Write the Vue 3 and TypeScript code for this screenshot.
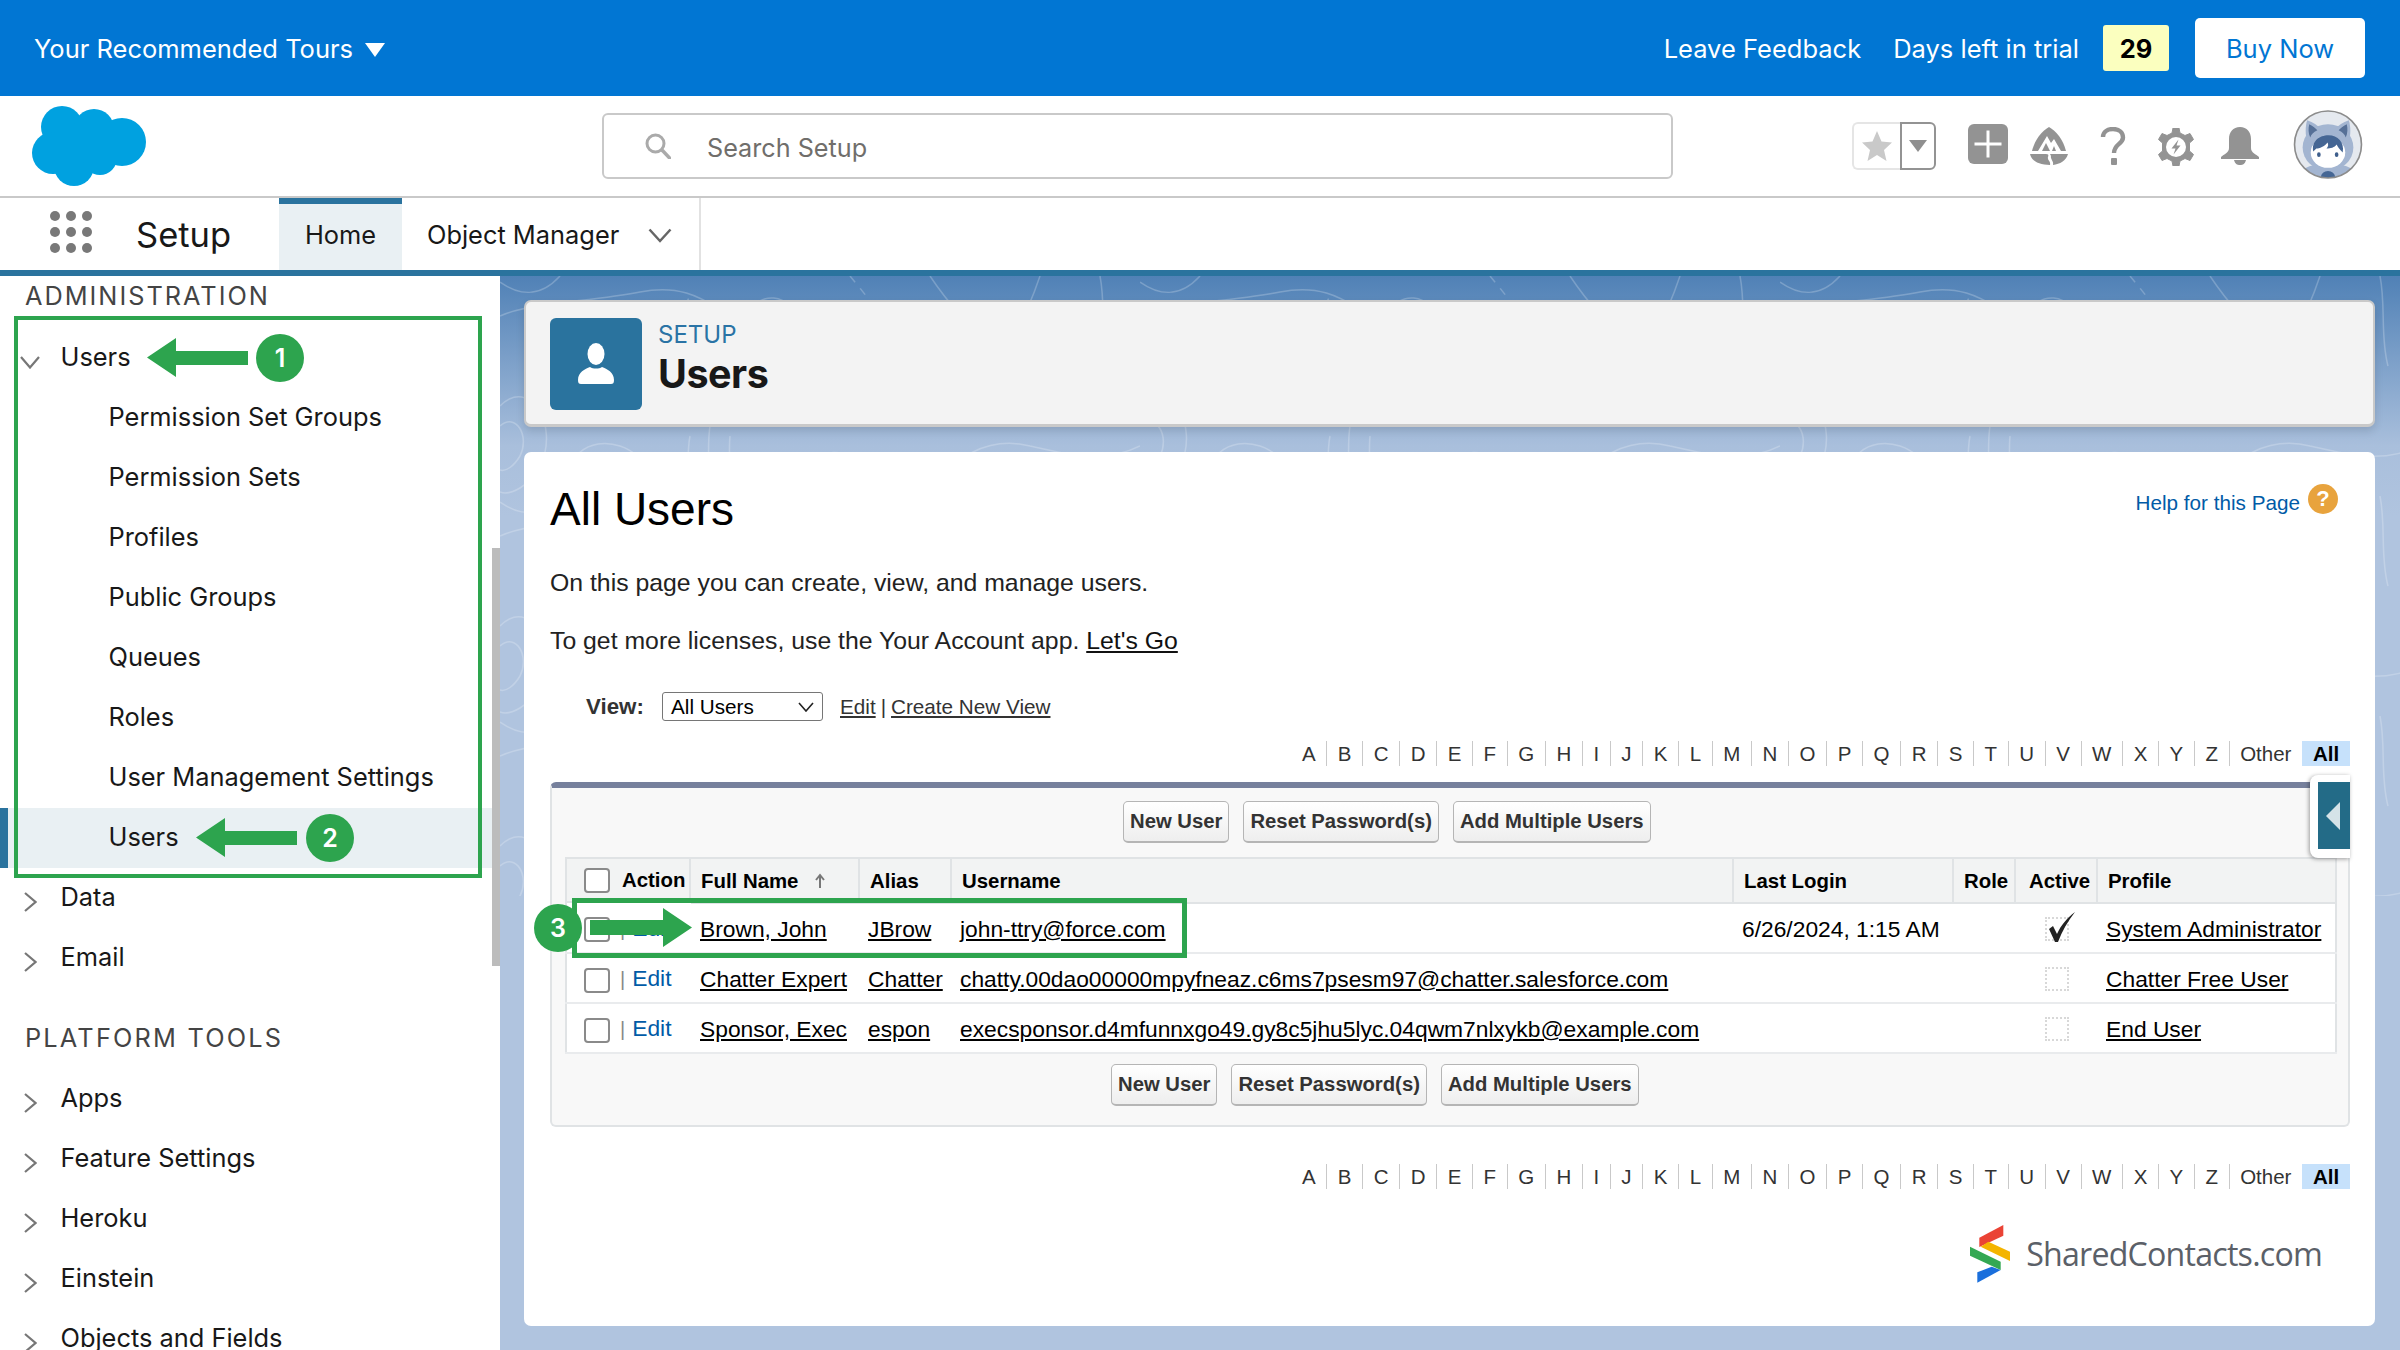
<script setup lang="ts">
interface UserRow {
  name: string
  alias: string
  username: string
  lastLogin: string
  active: boolean
  profile: string
}

const userSubItems: string[] = [
  'Permission Set Groups',
  'Permission Sets',
  'Profiles',
  'Public Groups',
  'Queues',
  'Roles',
  'User Management Settings'
]
const platformItems: string[] = ['Apps', 'Feature Settings', 'Heroku', 'Einstein', 'Objects and Fields']
const letters: string[] = 'ABCDEFGHIJKLMNOPQRSTUVWXYZ'.split('').concat('Other')
const buttons: string[] = ['New User', 'Reset Password(s)', 'Add Multiple Users']
const columns: string[] = ['Full Name', 'Alias', 'Username', 'Last Login', 'Role', 'Active', 'Profile']
const users: UserRow[] = [
  {
    name: 'Brown, John',
    alias: 'JBrow',
    username: 'john-ttry@force.com',
    lastLogin: '6/26/2024, 1:15 AM',
    active: true,
    profile: 'System Administrator'
  },
  {
    name: 'Chatter Expert',
    alias: 'Chatter',
    username: 'chatty.00dao00000mpyfneaz.c6ms7psesm97@chatter.salesforce.com',
    lastLogin: '',
    active: false,
    profile: 'Chatter Free User'
  },
  {
    name: 'Sponsor, Exec',
    alias: 'espon',
    username: 'execsponsor.d4mfunnxgo49.gy8c5jhu5lyc.04qwm7nlxykb@example.com',
    lastLogin: '',
    active: false,
    profile: 'End User'
  }
]
</script>

<template>
  <div class="page">
    <div class="trial-bar">
      <div class="tours">
        <span>Your Recommended Tours</span>
        <svg class="tours-caret" viewBox="0 0 20 14"><polygon points="0,0 20,0 10,14" fill="#fff" /></svg>
      </div>
      <div class="trial-right">
        <span class="feedback">Leave Feedback</span>
        <span class="days">Days left in trial</span>
        <span class="days-count">29</span>
        <button class="buy">Buy Now</button>
      </div>
    </div>

    <div class="global-header">
      <svg class="cloud" viewBox="0 0 114 80">
        <g fill="#00a1e0">
          <circle cx="30" cy="21" r="21" />
          <circle cx="62" cy="23" r="20" />
          <circle cx="90" cy="36" r="24" />
          <circle cx="21" cy="47" r="21" />
          <circle cx="42" cy="60" r="20" />
          <circle cx="68" cy="52" r="17" />
          <rect x="25" y="20" width="60" height="35" />
        </g>
      </svg>
      <div class="search">
        <svg class="search-icon" viewBox="0 0 26 26">
          <circle cx="10.5" cy="10.5" r="8.5" fill="none" stroke="#aaa" stroke-width="3" />
          <path d="M17 17 L24.5 25" stroke="#aaa" stroke-width="3.4" stroke-linecap="round" />
        </svg>
        <input class="search-input" placeholder="Search Setup" />
      </div>
      <div class="header-icons">
        <div class="fav">
          <div class="fav-star">
            <svg viewBox="0 0 32 32" width="32" height="32">
              <polygon points="16,1 20.5,11.5 31,12.5 23,20 25.5,31 16,25 6.5,31 9,20 1,12.5 11.5,11.5" fill="#c9c9c9" />
            </svg>
          </div>
          <div class="fav-drop">
            <svg viewBox="0 0 18 12" width="18" height="12"><polygon points="0,0 18,0 9,12" fill="#8f8f8f" /></svg>
          </div>
        </div>
        <svg class="hicon add" viewBox="0 0 40 40">
          <rect width="40" height="40" rx="6" fill="#939393" />
          <path d="M20 6.5 V33.5 M6.5 20 H33.5" stroke="#fff" stroke-width="3" />
        </svg>
        <svg class="hicon trail" viewBox="0 0 38 38">
          <path d="M19 0 C26 4 33 12 36 24 L2 24 C5 12 12 4 19 0 Z" fill="#939393" />
          <path d="M8 24 L17 9 L21 16 L24 12 L31 24 L26 24 L24 19 L22 24 L20 24 L16 16 L12 24 Z" fill="#fff" />
          <path d="M0 27 H14 C18 27 19 27 18 30 C17 33 21 34 20 38 C10 38 2 35 0 27 Z" fill="#939393" />
          <path d="M20 27 H38 C36 34 30 37 23 38 C24 34 20 32 21 29 Z" fill="#939393" />
        </svg>
        <svg class="hicon help" viewBox="0 0 26 38">
          <path d="M3 10 C3 4.500 8 2 13 2 C19 2 23 5.500 23 10.500 C23 17 14 17 14 26" fill="none" stroke="#939393" stroke-width="4.400" />
          <rect x="11" y="31" width="6" height="7" rx="1" fill="#939393" />
        </svg>
        <svg class="hicon gear" viewBox="0 0 36 38">
          <path d="M15 0 H21 L22 5 L27 7.500 L32 5.500 L35.500 11.500 L31.500 15 V23 L35.500 26.500 L32 32.500 L27 30.500 L22 33 L21 38 H15 L14 33 L9 30.500 L4 32.500 L0.500 26.500 L4.500 23 V15 L0.500 11.500 L4 5.500 L9 7.500 L14 5 Z" fill="#939393" stroke="#939393" stroke-width="1" stroke-linejoin="round" />
          <circle cx="18" cy="19" r="10" fill="#fff" />
          <path d="M20.500 11.500 L13.500 20.500 H17.500 L15.500 26.500 L22.500 17.500 H18.500 Z" fill="#939393" />
        </svg>
        <svg class="hicon bell" viewBox="0 0 38 38">
          <path d="M19 0 C26 0 30 5 30 12 V21 C30 26 35 27 38 30 V32 H0 V30 C3 27 8 26 8 21 V12 C8 5 12 0 19 0 Z" fill="#939393" />
          <path d="M13 33 H25 C24 37 22 38 19 38 C16 38 14 37 13 33 Z" fill="#939393" />
        </svg>
        <svg class="avatar" viewBox="8 6 69 68">
          <defs>
            <clipPath id="avatar-clip"><circle cx="42.500" cy="40" r="33" /></clipPath>
          </defs>
          <circle cx="42.500" cy="40" r="33" fill="#e5e9ef" />
          <g clip-path="url(#avatar-clip)">
            <path d="M10 80 C12 66 20 62 30 60 H55 C65 62 73 66 75 80 Z" fill="#a3b5d1" />
            <ellipse cx="42.500" cy="43" rx="25" ry="23" fill="#a3b5d1" />
            <path d="M22 16 C28 18 32 21 36 25 L22 38 C20 30 20 22 22 16 Z" fill="#a3b5d1" />
            <path d="M63 16 C57 18 53 21 49 25 L63 38 C65 30 65 22 63 16 Z" fill="#a3b5d1" />
            <path d="M24 20 C28 22 30 24 32 26 C28 28 26 30 25 33 C23 29 23 24 24 20 Z" fill="#567097" />
            <path d="M61 20 C57 22 55 24 53 26 C57 28 59 30 60 33 C62 29 62 24 61 20 Z" fill="#567097" />
            <ellipse cx="42.500" cy="48" rx="17" ry="15" fill="#fff" />
            <path d="M28 47 C26 37 34 31 43 31 C52 31 59 38 57 48 C54 45 52 42 51 40 C49 43 45 44 41 44 C43 42 43 40 42 38 C39 42 34 44 31 44 C30 45 29 46 28 47 Z" fill="#456694" />
            <ellipse cx="33.500" cy="50" rx="1.800" ry="2.400" fill="#3f5f8c" />
            <ellipse cx="51" cy="50" rx="1.800" ry="2.400" fill="#3f5f8c" />
            <ellipse cx="42.500" cy="72" rx="7" ry="6" fill="#456694" />
          </g>
          <circle cx="42.500" cy="40" r="33" fill="none" stroke="#8c8c8c" stroke-width="1.600" />
        </svg>
      </div>
    </div>

    <nav class="app-nav">
      <div class="launcher">
        <span v-for="n in 9" :key="n" class="dot"></span>
      </div>
      <span class="app-name">Setup</span>
      <div class="tab tab-active">Home</div>
      <div class="tab tab-object">
        <span>Object Manager</span>
        <svg class="tab-chevron" viewBox="0 0 24 15">
          <path d="M1.500 1.500 L12 13 L22.500 1.500" fill="none" stroke="#666" stroke-width="2.500" />
        </svg>
      </div>
    </nav>

    <div class="body-row">
      <aside class="sidebar">
        <div class="side-scroll"></div>
        <div class="side-title">ADMINISTRATION</div>
        <div class="side-item">
          <span class="chev-slot">
            <svg class="chev-down" viewBox="0 0 20 13"><path d="M1 1 L10 11.500 L19 1" fill="none" stroke="#777" stroke-width="2.200" /></svg>
          </span>
          Users
        </div>
        <div v-for="item in userSubItems" :key="item" class="side-item side-sub">{{ item }}</div>
        <div class="side-item side-sub side-current">Users</div>
        <div class="side-item">
          <span class="chev-slot">
            <svg class="chev-right" viewBox="0 0 13 20"><path d="M1 1 L11.500 10 L1 19" fill="none" stroke="#777" stroke-width="2.200" /></svg>
          </span>
          Data
        </div>
        <div class="side-item">
          <span class="chev-slot">
            <svg class="chev-right" viewBox="0 0 13 20"><path d="M1 1 L11.500 10 L1 19" fill="none" stroke="#777" stroke-width="2.200" /></svg>
          </span>
          Email
        </div>
        <div class="side-title side-title-2">PLATFORM TOOLS</div>
        <div v-for="item in platformItems" :key="item" class="side-item">
          <span class="chev-slot">
            <svg class="chev-right" viewBox="0 0 13 20"><path d="M1 1 L11.500 10 L1 19" fill="none" stroke="#777" stroke-width="2.200" /></svg>
          </span>
          {{ item }}
        </div>
      </aside>

      <main class="content">
        <svg class="topo" width="1900" height="620">
          <defs>
            <pattern id="topo-lines" width="640" height="220" patternUnits="userSpaceOnUse">
              <g fill="none" stroke="#fff" stroke-opacity="0.22" stroke-width="1.500">
                <path d="M0 6 C20 20 40 22 60 0" />
                <path d="M0 40 C30 26 90 26 140 16 C190 6 210 30 240 44" />
                <path d="M70 60 C80 30 110 30 120 50 C130 70 170 60 190 20" stroke-dasharray="10 8" />
                <path d="M240 60 C240 30 270 10 290 30 C305 46 310 60 300 80" />
                <path d="M350 0 C370 24 390 50 400 70" stroke-dasharray="8 8" />
                <path d="M430 0 C450 30 470 50 490 70" />
                <path d="M540 0 C530 30 520 50 510 70" />
                <path d="M600 0 C606 30 600 60 608 90" />
                <path d="M0 130 C30 100 60 150 40 190 C30 210 10 220 0 216" />
                <path d="M0 150 C16 136 30 160 20 180 C14 190 6 196 0 194" />
                <path d="M70 220 C60 180 90 160 120 170 C150 180 150 210 140 220" />
                <path d="M190 160 C186 180 190 200 186 220" />
                <path d="M210 150 C206 176 212 200 206 220" />
                <path d="M230 160 C228 180 232 200 228 220" />
                <path d="M300 220 C300 180 330 170 350 180 C370 190 370 210 362 220" />
                <path d="M430 220 C450 180 490 160 530 170 C560 176 600 190 640 170" />
                <path d="M480 220 C490 200 520 190 560 200" stroke-dasharray="8 8" />
                <path d="M270 110 C300 90 340 110 360 130 C390 150 430 130 450 110" />
                <path d="M90 100 C120 80 160 100 180 130" />
              </g>
            </pattern>
          </defs>
          <rect width="1900" height="620" fill="url(#topo-lines)" />
        </svg>

        <section class="page-head">
          <div class="head-icon">
            <svg viewBox="0 0 36 42" width="36" height="42">
              <ellipse cx="18" cy="11" rx="8.500" ry="11" fill="#fff" />
              <path d="M0 37 C0 29 7 26 12 24 C15 26 21 26 24 24 C29 26 36 29 36 37 C36 40 35 41 33 41 H3 C1 41 0 40 0 37 Z" fill="#fff" />
            </svg>
          </div>
          <div class="head-text">
            <div class="head-kicker">SETUP</div>
            <div class="head-title">Users</div>
          </div>
        </section>

        <section class="main-card">
          <div class="title-row">
            <h1 class="page-title">All Users</h1>
            <div class="help-link">
              <span>Help for this Page</span>
              <span class="help-badge">?</span>
            </div>
          </div>
          <p class="intro">On this page you can create, view, and manage users.</p>
          <p class="intro intro-2">To get more licenses, use the Your Account app. <a class="lets-go">Let's Go</a></p>

          <div class="view-row">
            <label class="view-label">View:</label>
            <div class="view-select">
              <span>All Users</span>
              <svg viewBox="0 0 16 10" width="16" height="10"><path d="M1 1 L8 9 L15 1" fill="none" stroke="#222" stroke-width="1.600" /></svg>
            </div>
            <a class="view-link">Edit</a>
            <span class="view-sep">|</span>
            <a class="view-link">Create New View</a>
          </div>

          <div class="alpha">
            <span v-for="l in letters" :key="l" class="alpha-item">{{ l }}</span>
            <span class="alpha-all">All</span>
          </div>

          <div class="panel">
            <div class="panel-tab">
              <div class="panel-tab-inner">
                <svg viewBox="0 0 14 28" width="14" height="28">
                  <polygon points="0,14 14,0 14,28" fill="#d5e3e8" />
                </svg>
              </div>
            </div>
            <div class="btn-row btn-row-top">
              <button v-for="b in buttons" :key="b" class="pb-btn">{{ b }}</button>
            </div>
            <table class="users-table">
              <colgroup>
                <col class="c-action" />
                <col class="c-name" />
                <col class="c-alias" />
                <col class="c-user" />
                <col class="c-login" />
                <col class="c-role" />
                <col class="c-active" />
                <col class="c-profile" />
              </colgroup>
              <thead>
                <tr>
                  <th class="th-action">
                    <input type="checkbox" class="check" />
                    <span>Action</span>
                  </th>
                  <th v-for="c in columns" :key="c" :class="{ 'th-wide': c === 'Active' }">
                    {{ c }}
                    <svg v-if="c === 'Full Name'" class="sort-arrow" viewBox="0 0 12 16" width="12" height="16">
                      <path d="M6 15 V3 M2 7 L6 2 L10 7" fill="none" stroke="#777" stroke-width="2" />
                    </svg>
                  </th>
                </tr>
              </thead>
              <tbody>
                <tr v-for="u in users" :key="u.username">
                  <td class="td-action">
                    <input type="checkbox" class="check" />
                    <span class="pipe">|</span>
                    <a class="edit">Edit</a>
                  </td>
                  <td><a class="cell-link">{{ u.name }}</a></td>
                  <td><a class="cell-link">{{ u.alias }}</a></td>
                  <td><a class="cell-link">{{ u.username }}</a></td>
                  <td>{{ u.lastLogin }}</td>
                  <td></td>
                  <td>
                    <span class="active-box">
                      <svg v-if="u.active" class="tick" viewBox="0 0 30 32" width="30" height="32">
                        <path d="M3 18 L7 15 L11 23 C15 14 21 7 29 1 C22 10 16 20 12 31 L9 31 Z" fill="#222" />
                      </svg>
                    </span>
                  </td>
                  <td><a class="cell-link">{{ u.profile }}</a></td>
                </tr>
              </tbody>
            </table>
            <div class="btn-row btn-row-bottom">
              <button v-for="b in buttons" :key="b + '-2'" class="pb-btn">{{ b }}</button>
            </div>
          </div>

          <div class="alpha alpha-bottom">
            <span v-for="l in letters" :key="l + '-2'" class="alpha-item">{{ l }}</span>
            <span class="alpha-all">All</span>
          </div>

          <div class="brand">
            <svg class="brand-mark" viewBox="0 0 240 240">
              <polygon points="58,68 130,30 130,62 58,96" fill="#ea4335" />
              <polygon points="85,80 150,110 150,138 62,95" fill="#f4b400" />
              <polygon points="30,95 122,140 122,165 30,122" fill="#34a853" />
              <polygon points="52,172 95,155 122,165 52,203" fill="#1a6fdc" />
            </svg>
            <span class="brand-name">SharedContacts.com</span>
          </div>
        </section>
      </main>
    </div>

    <!-- annotations over the screenshot -->
    <div class="note-box note-box-1"></div>
    <div class="note-box note-box-3"></div>
    <svg class="note-arrow arrow-1" viewBox="0 0 101 39"><polygon points="0,19.500 29,0 29,13 101,13 101,27 29,27 29,39" /></svg>
    <svg class="note-arrow arrow-2" viewBox="0 0 101 39"><polygon points="0,19.500 29,0 29,13 101,13 101,27 29,27 29,39" /></svg>
    <svg class="note-arrow arrow-3" viewBox="0 0 102 39"><polygon points="102,19.500 73,0 73,12 0,12 0,27 73,27 73,39" /></svg>
    <span class="note-num num-1">1</span>
    <span class="note-num num-2">2</span>
    <span class="note-num num-3">3</span>
  </div>
</template>

<style scoped>
.page {
  position: relative;
  width: 2400px;
  height: 1350px;
  overflow: hidden;
  display: flex;
  flex-direction: column;
  background: #fff;
  font-family: Inter, "Liberation Sans", sans-serif;
  color: #181818;
}

.trial-bar {
  height: 96px;
  flex-shrink: 0;
  background: #0176d3;
  color: #fff;
  font-size: 25.500px;
  display: flex;
  align-items: center;
  justify-content: space-between;
  padding: 0 35px 0 34px;
}
.tours {
  display: flex;
  align-items: center;
  gap: 12px;
}
.tours-caret {
  width: 20px;
  height: 14px;
  margin-top: 4px;
}
.trial-right {
  display: flex;
  align-items: center;
}
.days {
  margin-left: 32px;
}
.days-count {
  width: 66px;
  height: 46px;
  margin-left: 24px;
  background: #fbffbf;
  border-radius: 3px;
  color: #000;
  font-weight: 700;
  display: flex;
  align-items: center;
  justify-content: center;
}
.buy {
  width: 170px;
  height: 60px;
  margin-left: 26px;
  border: 0;
  border-radius: 5px;
  background: #fff;
  color: #0176d3;
  font: inherit;
}

.global-header {
  height: 102px;
  flex-shrink: 0;
  border-bottom: 2px solid #c9c9c9;
  box-sizing: border-box;
  display: flex;
  align-items: flex-start;
  padding-left: 32px;
}
.cloud {
  width: 114px;
  height: 80px;
  margin-top: 10px;
}
.search {
  width: 1071px;
  height: 66px;
  margin: 17px 0 0 456px;
  box-sizing: border-box;
  border: 2px solid #c9c9c9;
  border-radius: 6px;
  display: flex;
  align-items: center;
  padding-left: 41px;
}
.search-icon {
  width: 26px;
  height: 26px;
  flex-shrink: 0;
}
.search-input {
  flex: 1;
  margin-left: 36px;
  padding: 3px 0 0;
  border: 0;
  outline: 0;
  background: transparent;
  font: 25.200px Inter, "Liberation Sans", sans-serif;
}
.search-input::placeholder {
  color: #706e6b;
  opacity: 1;
}
.header-icons {
  position: relative;
  flex: 1;
  height: 100px;
  display: flex;
  align-items: flex-start;
  margin-left: 179px;
}
.fav {
  display: flex;
  margin-top: 26px;
  height: 48px;
}
.fav-star {
  width: 48px;
  box-sizing: border-box;
  border: 2px solid #e5e5e5;
  border-right: 0;
  border-radius: 6px 0 0 6px;
  display: flex;
  align-items: center;
  justify-content: center;
}
.fav-drop {
  width: 36px;
  box-sizing: border-box;
  border: 2px solid #939393;
  border-radius: 0 6px 6px 0;
  display: flex;
  align-items: center;
  justify-content: center;
}
.hicon {
  flex-shrink: 0;
  height: 38px;
}
.add {
  width: 40px;
  height: 40px;
  margin: 28px 0 0 32px;
}
.trail {
  width: 38px;
  margin: 31px 0 0 22px;
}
.help {
  width: 26px;
  margin: 31px 0 0 32px;
}
.gear {
  width: 36px;
  margin: 32px 0 0 32px;
}
.bell {
  width: 38px;
  margin: 31px 0 0 27px;
}
.avatar {
  width: 70px;
  height: 69px;
  margin: 14px 0 0 34px;
  flex-shrink: 0;
}

.app-nav {
  height: 78px;
  flex-shrink: 0;
  box-sizing: border-box;
  border-bottom: 6px solid #2a739e;
  display: flex;
  align-items: stretch;
}
.launcher {
  width: 42px;
  height: 42px;
  margin: 13px 0 0 50px;
  display: grid;
  grid-template-columns: repeat(3, 10px);
  grid-auto-rows: 10px;
  gap: 6px;
}
.dot {
  border-radius: 50%;
  background: #787878;
}
.app-name {
  width: 143px;
  margin-left: 44px;
  font-size: 34.500px;
  line-height: 74px;
}
.tab {
  font-size: 25.400px;
  line-height: 74px;
}
.tab-active {
  width: 123px;
  box-sizing: border-box;
  text-align: center;
  background: #e9f0f3;
  border-top: 6px solid #2a739e;
  line-height: 62px;
}
.tab-object {
  width: 299px;
  box-sizing: border-box;
  padding: 2px 0 0 25px;
  border-right: 2px solid #e2e2e2;
  display: flex;
  align-items: center;
}
.tab-chevron {
  width: 24px;
  height: 15px;
  margin-left: 29px;
}

.body-row {
  flex: 1;
  display: flex;
  min-height: 0;
}
.sidebar {
  position: relative;
  isolation: isolate;
  width: 500px;
  flex-shrink: 0;
  overflow: hidden;
}
.side-scroll {
  position: absolute;
  right: 0;
  top: 272px;
  width: 8px;
  height: 418px;
  background: #bcbcbc;
  z-index: 1;
}
.side-title {
  height: 40px;
  line-height: 40px;
  margin-bottom: 10px;
  padding-left: 25px;
  font-size: 25.300px;
  letter-spacing: 2px;
  color: #444;
}
.side-title-2 {
  margin: 32px 0 9px;
  letter-spacing: 2.200px;
}
.side-item {
  height: 60px;
  display: flex;
  align-items: center;
  font-size: 25.400px;
  box-sizing: border-box;
}
.side-sub {
  padding-left: 108.500px;
}
.side-current {
  position: relative;
}
.side-current::before {
  content: "";
  position: absolute;
  left: 0;
  right: 0;
  top: 2px;
  bottom: -2px;
  z-index: -1;
  background: #e9f0f3;
  box-shadow: inset 8px 0 0 #2a739e;
}
.chev-slot {
  width: 60.500px;
  flex-shrink: 0;
  display: flex;
  padding-top: 12px;
}
.chev-down {
  width: 20px;
  height: 13px;
  margin-left: 20px;
}
.chev-right {
  width: 13px;
  height: 20px;
  margin-left: 24px;
}

.content {
  position: relative;
  flex: 1;
  min-width: 0;
  padding: 24px 25px 24px 24px;
  display: flex;
  flex-direction: column;
  gap: 25px;
  background: linear-gradient(#5081b6 0, #a9bfdc 170px, #b0c4df 240px);
}
.topo {
  position: absolute;
  left: 0;
  top: 0;
}
.page-head {
  position: relative;
  height: 127px;
  box-sizing: border-box;
  flex-shrink: 0;
  background: #f3f3f3;
  border: 1px solid #c9c9c9;
  border-width: 2px 2px 3px 2px;
  border-radius: 7px;
  box-shadow: 0 4px 8px rgba(0, 0, 0, 0.12);
  display: flex;
  padding: 16px 0 0 24px;
}
.head-icon {
  width: 92px;
  height: 92px;
  border-radius: 6px;
  background: #2a739e;
  display: flex;
  align-items: center;
  justify-content: center;
}
.head-text {
  margin-left: 16px;
}
.head-kicker {
  font-size: 24px;
  line-height: 34px;
  color: #2a73a5;
}
.head-title {
  font-size: 39.500px;
  line-height: 44px;
  font-weight: 700;
  letter-spacing: -0.5px;
}

.main-card {
  position: relative;
  flex: 1;
  min-height: 0;
  background: #fff;
  border-radius: 7px;
  padding: 29px 25px 0 26px;
  font-family: "Liberation Sans", Arial, sans-serif;
  color: #000;
}
.title-row {
  display: flex;
  justify-content: space-between;
  height: 56px;
}
.page-title {
  margin: 0;
  font-size: 46px;
  line-height: 56px;
  font-weight: 400;
}
.help-link {
  display: flex;
  align-items: flex-start;
  gap: 8px;
  margin: -1px 12px 0 0;
  color: #015ba7;
  font-size: 20.700px;
  line-height: 46px;
}
.help-badge {
  width: 30px;
  height: 30px;
  margin-top: 4px;
  border-radius: 50%;
  background: #e8a33d;
  color: #fff;
  font-weight: 700;
  font-size: 22px;
  line-height: 30px;
  text-align: center;
}
.intro {
  margin: 31px 0 0;
  font-size: 24.800px;
  line-height: 30px;
  color: #222;
}
.intro-2 {
  margin-top: 28px;
}
.lets-go {
  text-decoration: underline;
  color: #111;
}

.view-row {
  height: 29px;
  margin: 36px 0 0 36px;
  display: flex;
  align-items: center;
  font-size: 20.700px;
  color: #333;
}
.view-label {
  width: 76px;
  font-weight: 700;
  font-size: 22.300px;
}
.view-select {
  width: 161px;
  height: 29px;
  box-sizing: border-box;
  border: 1.500px solid #767676;
  border-radius: 3px;
  background: #fff;
  color: #000;
  padding: 0 8px;
  display: flex;
  align-items: center;
  justify-content: space-between;
}
.view-link {
  text-decoration: underline;
}
.view-select + .view-link {
  margin-left: 17px;
}
.view-sep {
  margin: 0 5px;
}

.alpha {
  height: 25px;
  margin-top: 20px;
  display: flex;
  justify-content: flex-end;
  align-items: stretch;
  font-size: 20.500px;
  line-height: 25px;
  color: #333;
}
.alpha-item {
  padding: 0 10.600px;
  border-right: 1px solid #c9c9c9;
}
.alpha-all {
  width: 48px;
  margin-left: 0;
  text-align: center;
  background: #c6e1fb;
  font-weight: 700;
  color: #000;
}
.alpha-item:nth-last-child(2) {
  border-right: 0;
}
.alpha-bottom {
  margin-top: 37px;
}

.panel {
  position: relative;
  height: 345px;
  margin-top: 16px;
  box-sizing: border-box;
  padding: 0 13px;
  border: 2px solid #e0e3e5;
  border-top: 6px solid #76809c;
  border-radius: 6px;
  background: #f8f8f8;
}
.panel-tab {
  position: absolute;
  right: -2px;
  top: -13px;
  width: 40px;
  height: 83px;
  box-sizing: border-box;
  padding: 7px 0 9px 8px;
  background: #fff;
  border-radius: 8px 0 0 8px;
  box-shadow: -1px 1px 4px rgba(0, 0, 0, 0.38);
}
.panel-tab-inner {
  height: 100%;
  background: #236b87;
  display: flex;
  align-items: center;
  padding-left: 8px;
}
.btn-row {
  display: flex;
  gap: 14px;
}
.btn-row-top {
  height: 42px;
  padding: 13px 0 14px 558px;
}
.btn-row-bottom {
  height: 42px;
  padding: 10px 0 0 546px;
}
.pb-btn {
  height: 42px;
  padding: 0 6px;
  box-sizing: border-box;
  border: 1.500px solid #b5b5b5;
  border-bottom-width: 2.500px;
  border-radius: 5px;
  background: linear-gradient(#fff, #eee);
  color: #333;
  font: 700 20.300px "Liberation Sans", Arial, sans-serif;
}
.users-table {
  width: 1770px;
  table-layout: fixed;
  border-collapse: collapse;
  background: #fff;
  border: 2px solid #e0e3e5;
  font-size: 22.800px;
}
.c-action { width: 125px; }
.c-name { width: 168px; }
.c-alias { width: 92px; }
.c-user { width: 782px; }
.c-login { width: 220px; }
.c-role { width: 62px; }
.c-active { width: 82px; }
.c-profile { width: 239px; }
.users-table th {
  height: 44px;
  padding: 1px 0 0 10px;
  box-sizing: border-box;
  background: #f2f3f3;
  border-right: 2px solid #e0e3e5;
  border-bottom: 2px solid #e0e3e5;
  text-align: left;
  font-size: 20.400px;
  font-weight: 700;
  white-space: nowrap;
}
.users-table th:last-child {
  border-right: 0;
}
.users-table th.th-wide {
  padding-left: 13px;
}
.users-table td {
  height: 50px;
  padding: 2px 0 0 9px;
  box-sizing: border-box;
  border-bottom: 2px solid #e9ebed;
  white-space: nowrap;
}
.th-action {
  display: flex;
  align-items: center;
}
.th-action span {
  margin-left: 12px;
}
.users-table th.th-action {
  padding-left: 17px;
  height: 44px;
}
.users-table td.td-action {
  padding-left: 17px;
}
.check {
  appearance: none;
  width: 26px;
  height: 25px;
  margin: 0;
  box-sizing: border-box;
  border: 2px solid #8a8a8a;
  border-radius: 4px;
  background: #fff;
  vertical-align: middle;
  flex-shrink: 0;
}
.pipe {
  margin-left: 10px;
  color: #888;
  font-size: 20px;
}
.edit {
  margin-left: 7px;
  color: #015ba7;
}
.cell-link {
  color: #000;
  text-decoration: underline;
}
.sort-arrow {
  margin-left: 10px;
  vertical-align: -1px;
}
.active-box {
  position: relative;
  display: block;
  width: 24px;
  height: 24px;
  margin-left: 21px;
  box-sizing: border-box;
  border: 2px dotted #d8d8d8;
}
.tick {
  position: absolute;
  left: -1px;
  top: -8px;
}

.brand {
  position: absolute;
  right: 53px;
  bottom: 31px;
  display: flex;
  align-items: center;
}
.brand-mark {
  width: 80px;
  height: 80px;
}
.brand-name {
  margin: 0 0 3px -14px;
  font-family: "Open Sans", sans-serif;
  font-size: 32.200px;
  letter-spacing: -0.8px;
  color: #5b6068;
}

.note-box {
  position: absolute;
  box-sizing: border-box;
  border: 4px solid #2da44e;
}
.note-box-1 {
  left: 14px;
  top: 316px;
  width: 468px;
  height: 562px;
}
.note-box-3 {
  left: 572px;
  top: 898px;
  width: 615px;
  height: 60px;
  border-width: 5px;
}
.note-arrow {
  position: absolute;
  width: 101px;
  height: 39px;
  fill: #2da44e;
}
.arrow-1 {
  left: 147px;
  top: 338px;
}
.arrow-2 {
  left: 196px;
  top: 818px;
}
.arrow-3 {
  left: 590px;
  top: 908px;
  width: 102px;
}
.note-num {
  position: absolute;
  width: 48px;
  height: 48px;
  border-radius: 50%;
  background: #2da44e;
  color: #fff;
  font-size: 25px;
  font-weight: 600;
  line-height: 48px;
  text-align: center;
}
.num-1 {
  left: 256px;
  top: 334px;
}
.num-2 {
  left: 306px;
  top: 814px;
}
.num-3 {
  left: 534px;
  top: 904px;
}
</style>

<style>
html,
body {
  margin: 0;
  background: #fff;
}
</style>
